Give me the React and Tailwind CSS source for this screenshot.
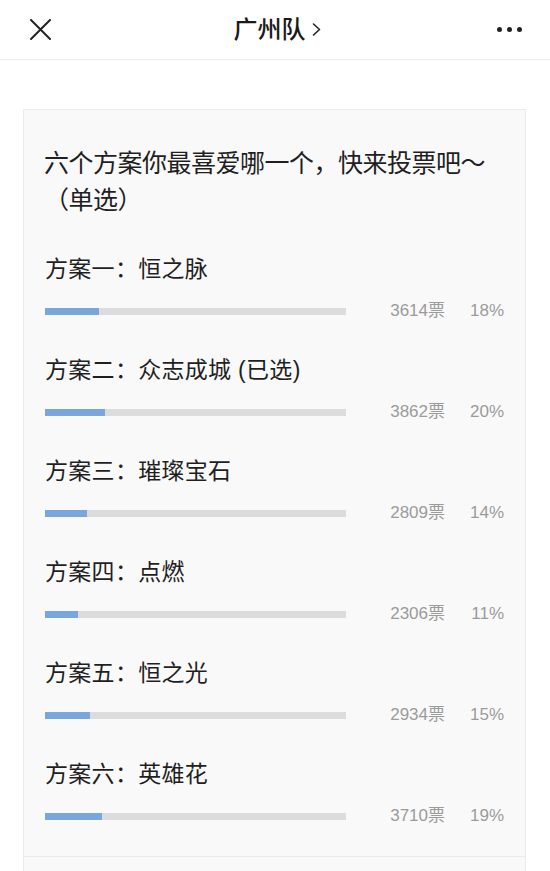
import { useState } from 'react';

const options = [
  { label: '方案一：恒之脉', votes: 3614, pct: 18 },
  { label: '方案二：众志成城 (已选)', votes: 3862, pct: 20 },
  { label: '方案三：璀璨宝石', votes: 2809, pct: 14 },
  { label: '方案四：点燃', votes: 2306, pct: 11 },
  { label: '方案五：恒之光', votes: 2934, pct: 15 },
  { label: '方案六：英雄花', votes: 3710, pct: 19 },
];

const cjk = { fontFamily: '"Liberation Sans", "Noto Sans CJK SC", sans-serif' };

function Header() {
  return (
    <div className="h-[60px] flex items-center justify-between border-b border-[#ececec] bg-white">
      <button className="w-[80px] h-full flex items-center pl-[30px]">
        <svg width="21" height="21" viewBox="0 0 21 21" fill="none" stroke="#222" strokeWidth="2" strokeLinecap="round">
          <path d="M1 1L20 20M20 1L1 20" />
        </svg>
      </button>
      <div className="flex items-center gap-[6px] text-[24px] font-medium text-[#1a1a1a] leading-none pl-[4px]">
        <span>广州队</span>
        <svg width="9" height="13" viewBox="0 0 9 13" fill="none" stroke="#222" strokeWidth="1.6" strokeLinecap="round" strokeLinejoin="round">
          <path d="M1.5 1L7.5 6.5L1.5 12" />
        </svg>
      </div>
      <div className="w-[80px] h-full flex items-center justify-end gap-[5px] pr-[28px]">
        <span className="w-[5px] h-[5px] rounded-full bg-[#222]" />
        <span className="w-[5px] h-[5px] rounded-full bg-[#222]" />
        <span className="w-[5px] h-[5px] rounded-full bg-[#222]" />
      </div>
    </div>
  );
}

export default function App() {
  const [selected] = useState(1);

  return (
    <div className="w-[550px] h-[871px] overflow-hidden bg-white" style={cjk}>
      <Header />

      <div className="mt-[49px] ml-[23px] mr-[24px] bg-[#f9f9fa] border border-[#ebebeb]">
        <div className="pt-[35px] pb-[30px] pl-[21px] pr-[21px]">
          <div className="text-[25px] leading-[37px] tracking-[-0.5px] text-[#1f1f1f] -ml-[1px]">
            六个方案你最喜爱哪一个，快来投票吧～（单选）
          </div>

          <div className="mt-[35px] flex flex-col gap-[34px]">
            {options.map((o, i) => (
              <div key={i} data-selected={i === selected}>
                <div className="text-[23px] leading-[30px] tracking-[0.3px] text-[#1f1f1f]">{o.label}</div>
                <div className="mt-[17px] h-[20px] flex items-center">
                  <div className="w-[301px] h-[7px] bg-[#dcdcdc]">
                    <div className="h-full bg-[#79a6dc]" style={{ width: `${o.pct}%` }} />
                  </div>
                  <span className="flex-1 text-right text-[17px] text-[#9b9b9b]">{o.votes}票</span>
                  <span className="w-[59px] text-right text-[17px] text-[#9b9b9b]">{o.pct}%</span>
                </div>
              </div>
            ))}
          </div>
        </div>
        <div className="border-t border-[#ebebeb] h-[40px]" />
      </div>
    </div>
  );
}
